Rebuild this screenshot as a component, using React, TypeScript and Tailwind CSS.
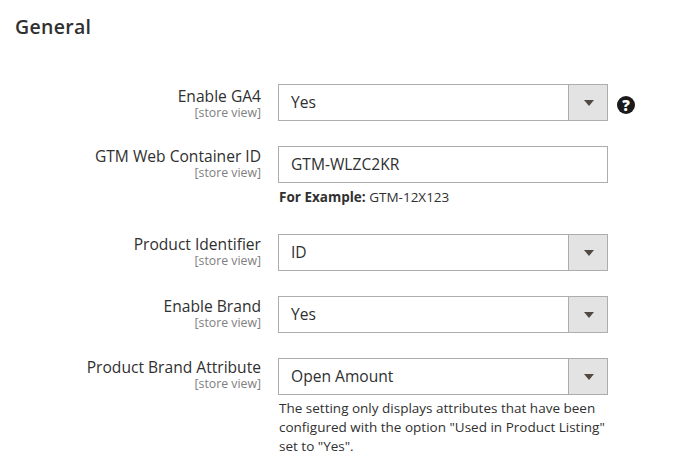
const font = { fontFamily: '"Open Sans", sans-serif' }

function Label({ text, className }: { text: string; className: string }) {
  return (
    <div className={'w-[262px] shrink-0 pr-[1px] text-right ' + className}>
      <div className="text-[15.6px] leading-[19px] text-[#303030]">{text}</div>
      <div className="text-[12.3px] leading-[14px] text-[#808080]">[store view]</div>
    </div>
  )
}

function Select({ value }: { value: string }) {
  return (
    <div className="flex h-[37px] w-[330px] border border-[#adadad] bg-white">
      <div className="flex flex-1 items-center pl-3 text-[15.6px] text-[#303030]">{value}</div>
      <div className="flex w-[39px] items-center justify-center border-l border-[#adadad] bg-[#e3e3e3] pl-[2px]">
        <div className="h-0 w-0 border-x-[5px] border-t-[6px] border-x-transparent border-t-[#514943]" />
      </div>
    </div>
  )
}

export default function App() {
  return (
    <div className="h-[459px] w-[685px] overflow-hidden bg-white" style={font}>
      <h2 className="pl-[15px] pt-[15px] text-[19.5px] font-semibold leading-6 tracking-[0.3px] text-[#303030]">General</h2>
      <div className="mt-[45px] flex flex-col">
        <div className="flex">
          <Label text="Enable GA4" className="pt-[3px]" />
          <div className="ml-[16px]"><Select value="Yes" /></div>
          <div className="ml-[9px] mt-[12px] flex h-[18px] w-[18px] items-center justify-center rounded-full bg-[#1a1a1a] text-[15px] font-extrabold leading-none text-white">?</div>
        </div>
        <div className="mt-[25px] flex">
          <Label text="GTM Web Container ID" className="pt-[1px]" />
          <div className="ml-[16px]">
            <div className="flex h-[37px] w-[330px] items-center border border-[#adadad] pl-3 text-[15.6px] text-[#303030]">GTM-WLZC2KR</div>
            <div className="mt-[5px] pl-[1px] text-[13.5px] leading-[19px] text-[#303030]"><b className="font-bold">For Example:</b> GTM-12X123</div>
          </div>
        </div>
        <div className="mt-[27px] flex">
          <Label text="Product Identifier" className="pt-[1px]" />
          <div className="ml-[16px]"><Select value="ID" /></div>
        </div>
        <div className="mt-[25px] flex">
          <Label text="Enable Brand" className="pt-[1px]" />
          <div className="ml-[16px]"><Select value="Yes" /></div>
        </div>
        <div className="mt-[25px] flex">
          <Label text="Product Brand Attribute" className="pt-0" />
          <div className="ml-[16px] w-[330px]">
            <Select value="Open Amount" />
            <div className="mt-[4px] pl-[1px] text-[13.5px] leading-[19px] text-[#303030]">The setting only displays attributes that have been configured with the option "Used in Product Listing" set to "Yes".</div>
          </div>
        </div>
      </div>
    </div>
  )
}
